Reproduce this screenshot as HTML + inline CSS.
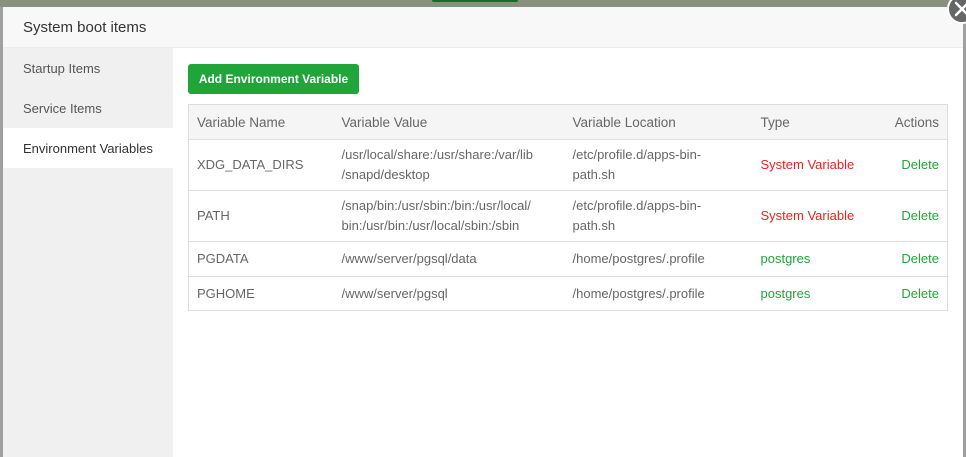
<!DOCTYPE html>
<html><head><meta charset="utf-8"><style>
*{box-sizing:border-box;margin:0;padding:0}
body{width:966px;height:457px;overflow:hidden;background:#a0a0a0;font-family:"Liberation Sans",sans-serif;position:relative;font-size:13px;color:#555}
.top{position:absolute;left:0;top:0;width:966px;height:7px;background:#87917d}
.gbtn{position:absolute;left:432px;top:0;width:86px;height:2px;background:#176b2c;border-radius:0 0 3px 3px}
.modal{position:absolute;left:3px;top:7px;width:960px;height:450px;background:#fff}
.hdr{height:41px;background:#f8f8f8;border-bottom:1px solid #ececec;padding-left:20px;line-height:41px;font-size:15px;color:#333}
.side{position:absolute;left:0;top:41px;width:170px;height:409px;background:#f0f0f0}
.side div{height:40px;line-height:42px;padding-left:20px;font-size:13px;color:#555}
.side .act{background:#fff;color:#333}
.btn{position:absolute;left:185px;top:57px;width:171px;height:30px;background:#20a53a;color:#fff;border-radius:3px;font-size:12px;font-weight:bold;line-height:30px;text-align:center}
table{position:absolute;left:185px;top:97px;width:760px;border-collapse:collapse;border:1px solid #ddd}
th{background:#f5f5f5;font-weight:normal;text-align:left;height:35px;padding-left:8px;color:#666;font-size:13.5px;border-bottom:1px solid #ddd}
td{padding-left:8px;border-top:1px solid #ddd;line-height:20px;color:#666;vertical-align:middle}
th.r{text-align:right;padding-right:8px}
.red{color:#f01e1e}.grn{color:#20a53a}
.close{position:absolute;left:947px;top:-6px;width:30px;height:30px;border-radius:50%;background:#666;border:2px solid #fff}
</style></head><body>
<div class="top"><div class="gbtn"></div></div>
<div class="modal">
<div class="hdr">System boot items</div>
<div class="side"><div>Startup Items</div><div>Service Items</div><div class="act">Environment Variables</div></div>
<div class="btn">Add Environment Variable</div>
<table>
<tr><th style="width:145px">Variable Name</th><th style="width:231px">Variable Value</th><th style="width:188px">Variable Location</th><th style="width:120px">Type</th><th class="r">Actions</th></tr>
<tr style="height:51px"><td>XDG_DATA_DIRS</td><td>/usr/local/share:/usr/share:/var/lib<br>/snapd/desktop</td><td>/etc/profile.d/apps-bin-<br>path.sh</td><td class="red">System Variable</td><td class="grn" style="text-align:right;padding-right:8px">Delete</td></tr>
<tr style="height:51px"><td>PATH</td><td>/snap/bin:/usr/sbin:/bin:/usr/local/<br>bin:/usr/bin:/usr/local/sbin:/sbin</td><td>/etc/profile.d/apps-bin-<br>path.sh</td><td class="red">System Variable</td><td class="grn" style="text-align:right;padding-right:8px">Delete</td></tr>
<tr style="height:35px"><td>PGDATA</td><td>/www/server/pgsql/data</td><td>/home/postgres/.profile</td><td class="grn">postgres</td><td class="grn" style="text-align:right;padding-right:8px">Delete</td></tr>
<tr style="height:34px"><td>PGHOME</td><td>/www/server/pgsql</td><td>/home/postgres/.profile</td><td class="grn">postgres</td><td class="grn" style="text-align:right;padding-right:8px">Delete</td></tr>
</table>
</div>
<div class="close"><svg width="26" height="26" viewBox="0 0 26 26" style="position:absolute;left:0;top:0"><path d="M7 7L19 19M19 7L7 19" stroke="#fff" stroke-width="2.5" stroke-linecap="round"/></svg></div>
</body></html>
